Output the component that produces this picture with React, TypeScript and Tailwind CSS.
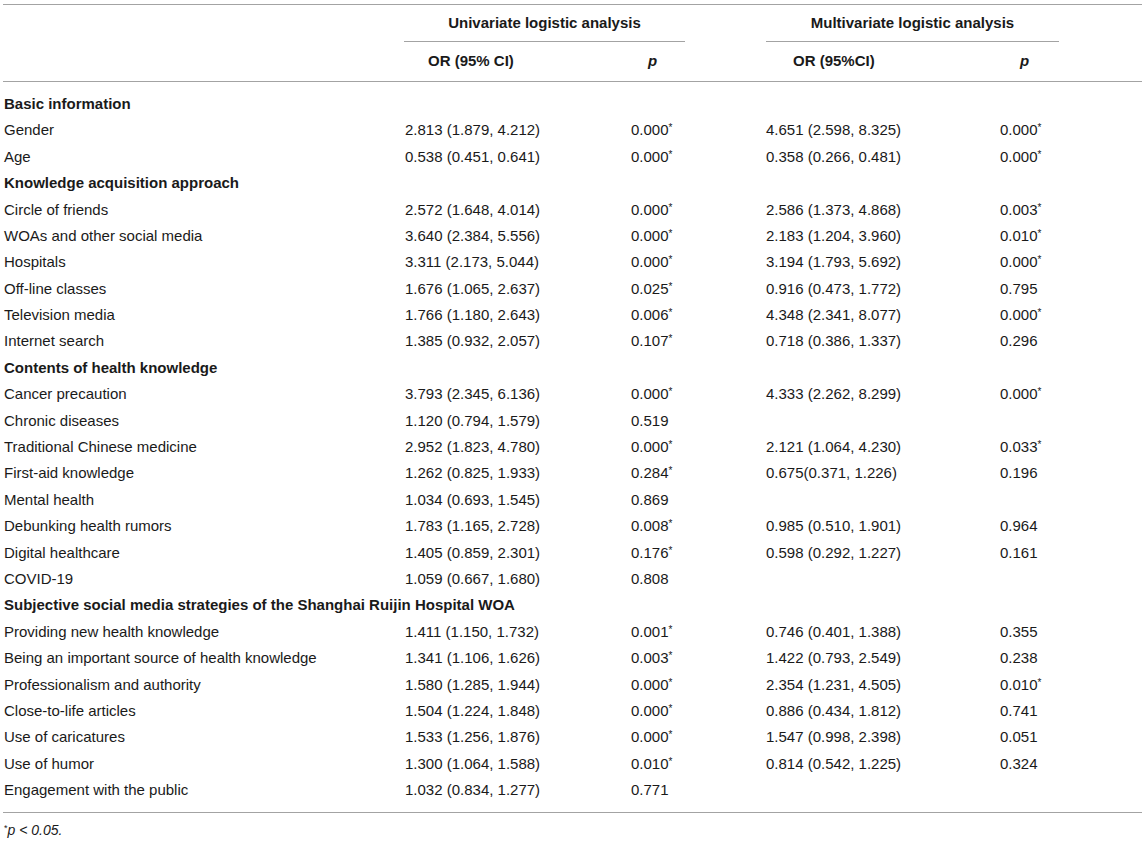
import React from 'react';

type Row = {
  label: string;
  head?: boolean;
  or1?: string;
  p1?: string;
  or2?: string;
  p2?: string;
};

const rows: Row[] = [
  { label: 'Basic information', head: true },
  { label: 'Gender', or1: '2.813 (1.879, 4.212)', p1: '0.000*', or2: '4.651 (2.598, 8.325)', p2: '0.000*' },
  { label: 'Age', or1: '0.538 (0.451, 0.641)', p1: '0.000*', or2: '0.358 (0.266, 0.481)', p2: '0.000*' },
  { label: 'Knowledge acquisition approach', head: true },
  { label: 'Circle of friends', or1: '2.572 (1.648, 4.014)', p1: '0.000*', or2: '2.586 (1.373, 4.868)', p2: '0.003*' },
  { label: 'WOAs and other social media', or1: '3.640 (2.384, 5.556)', p1: '0.000*', or2: '2.183 (1.204, 3.960)', p2: '0.010*' },
  { label: 'Hospitals', or1: '3.311 (2.173, 5.044)', p1: '0.000*', or2: '3.194 (1.793, 5.692)', p2: '0.000*' },
  { label: 'Off-line classes', or1: '1.676 (1.065, 2.637)', p1: '0.025*', or2: '0.916 (0.473, 1.772)', p2: '0.795' },
  { label: 'Television media', or1: '1.766 (1.180, 2.643)', p1: '0.006*', or2: '4.348 (2.341, 8.077)', p2: '0.000*' },
  { label: 'Internet search', or1: '1.385 (0.932, 2.057)', p1: '0.107*', or2: '0.718 (0.386, 1.337)', p2: '0.296' },
  { label: 'Contents of health knowledge', head: true },
  { label: 'Cancer precaution', or1: '3.793 (2.345, 6.136)', p1: '0.000*', or2: '4.333 (2.262, 8.299)', p2: '0.000*' },
  { label: 'Chronic diseases', or1: '1.120 (0.794, 1.579)', p1: '0.519' },
  { label: 'Traditional Chinese medicine', or1: '2.952 (1.823, 4.780)', p1: '0.000*', or2: '2.121 (1.064, 4.230)', p2: '0.033*' },
  { label: 'First-aid knowledge', or1: '1.262 (0.825, 1.933)', p1: '0.284*', or2: '0.675(0.371, 1.226)', p2: '0.196' },
  { label: 'Mental health', or1: '1.034 (0.693, 1.545)', p1: '0.869' },
  { label: 'Debunking health rumors', or1: '1.783 (1.165, 2.728)', p1: '0.008*', or2: '0.985 (0.510, 1.901)', p2: '0.964' },
  { label: 'Digital healthcare', or1: '1.405 (0.859, 2.301)', p1: '0.176*', or2: '0.598 (0.292, 1.227)', p2: '0.161' },
  { label: 'COVID-19', or1: '1.059 (0.667, 1.680)', p1: '0.808' },
  { label: 'Subjective social media strategies of the Shanghai Ruijin Hospital WOA', head: true },
  { label: 'Providing new health knowledge', or1: '1.411 (1.150, 1.732)', p1: '0.001*', or2: '0.746 (0.401, 1.388)', p2: '0.355' },
  { label: 'Being an important source of health knowledge', or1: '1.341 (1.106, 1.626)', p1: '0.003*', or2: '1.422 (0.793, 2.549)', p2: '0.238' },
  { label: 'Professionalism and authority', or1: '1.580 (1.285, 1.944)', p1: '0.000*', or2: '2.354 (1.231, 4.505)', p2: '0.010*' },
  { label: 'Close-to-life articles', or1: '1.504 (1.224, 1.848)', p1: '0.000*', or2: '0.886 (0.434, 1.812)', p2: '0.741' },
  { label: 'Use of caricatures', or1: '1.533 (1.256, 1.876)', p1: '0.000*', or2: '1.547 (0.998, 2.398)', p2: '0.051' },
  { label: 'Use of humor', or1: '1.300 (1.064, 1.588)', p1: '0.010*', or2: '0.814 (0.542, 1.225)', p2: '0.324' },
  { label: 'Engagement with the public', or1: '1.032 (0.834, 1.277)', p1: '0.771' },
];

const cols = 'grid grid-cols-[401px_226px_135px_234px_1fr]';

function Stat({ v }: { v?: string }) {
  if (!v) return <div />;
  const star = v.endsWith('*');
  const num = star ? v.slice(0, -1) : v;
  return (
    <div className="pl-px whitespace-nowrap">
      {num}
      {star && <span className="relative -top-[4px] text-[10px]">*</span>}
    </div>
  );
}

export default function App() {
  return (
    <div
      className="w-[1145px] h-[841px] bg-white px-[3px] pt-[4px] text-[15px] text-[#1a1a1a]"
      style={{ fontFamily: '"Liberation Sans", Arial, sans-serif' }}
    >
      <div className="border-t border-[#a3a3a3]">
        {/* group headings */}
        <div className="flex h-[37px] font-bold">
          <div className="ml-[401px] w-[281px] border-b border-[#a3a3a3] flex items-center justify-center">
            Univariate logistic analysis
          </div>
          <div className="ml-[81px] w-[293px] border-b border-[#a3a3a3] flex items-center justify-center">
            Multivariate logistic analysis
          </div>
        </div>
        <div className={`${cols} h-[40px] items-center font-bold border-b border-[#a3a3a3]`}>
          <div />
          <div className="pl-[24px]">OR (95% CI)</div>
          <div className="pl-[18px] italic">p</div>
          <div className="pl-[28px]">OR (95%CI)</div>
          <div className="pl-[21px] italic">p</div>
        </div>

        <div className="pt-[9px] pb-[8px] border-b border-[#a3a3a3]">
          {rows.map((r) =>
            r.head ? (
              <div key={r.label} className="h-[26.4px] flex items-center pl-px font-bold whitespace-nowrap">
                {r.label}
              </div>
            ) : (
              <div key={r.label} className={`${cols} h-[26.4px] items-center`}>
                <div className="pl-px whitespace-nowrap">{r.label}</div>
                <Stat v={r.or1} />
                <Stat v={r.p1} />
                <Stat v={r.or2} />
                <Stat v={r.p2} />
              </div>
            )
          )}
        </div>

        <div className="pt-[7px] pl-px text-[14px] italic">
          <span className="relative -top-[4px] text-[9px] not-italic">*</span>p &lt; 0.05.
        </div>
      </div>
    </div>
  );
}
